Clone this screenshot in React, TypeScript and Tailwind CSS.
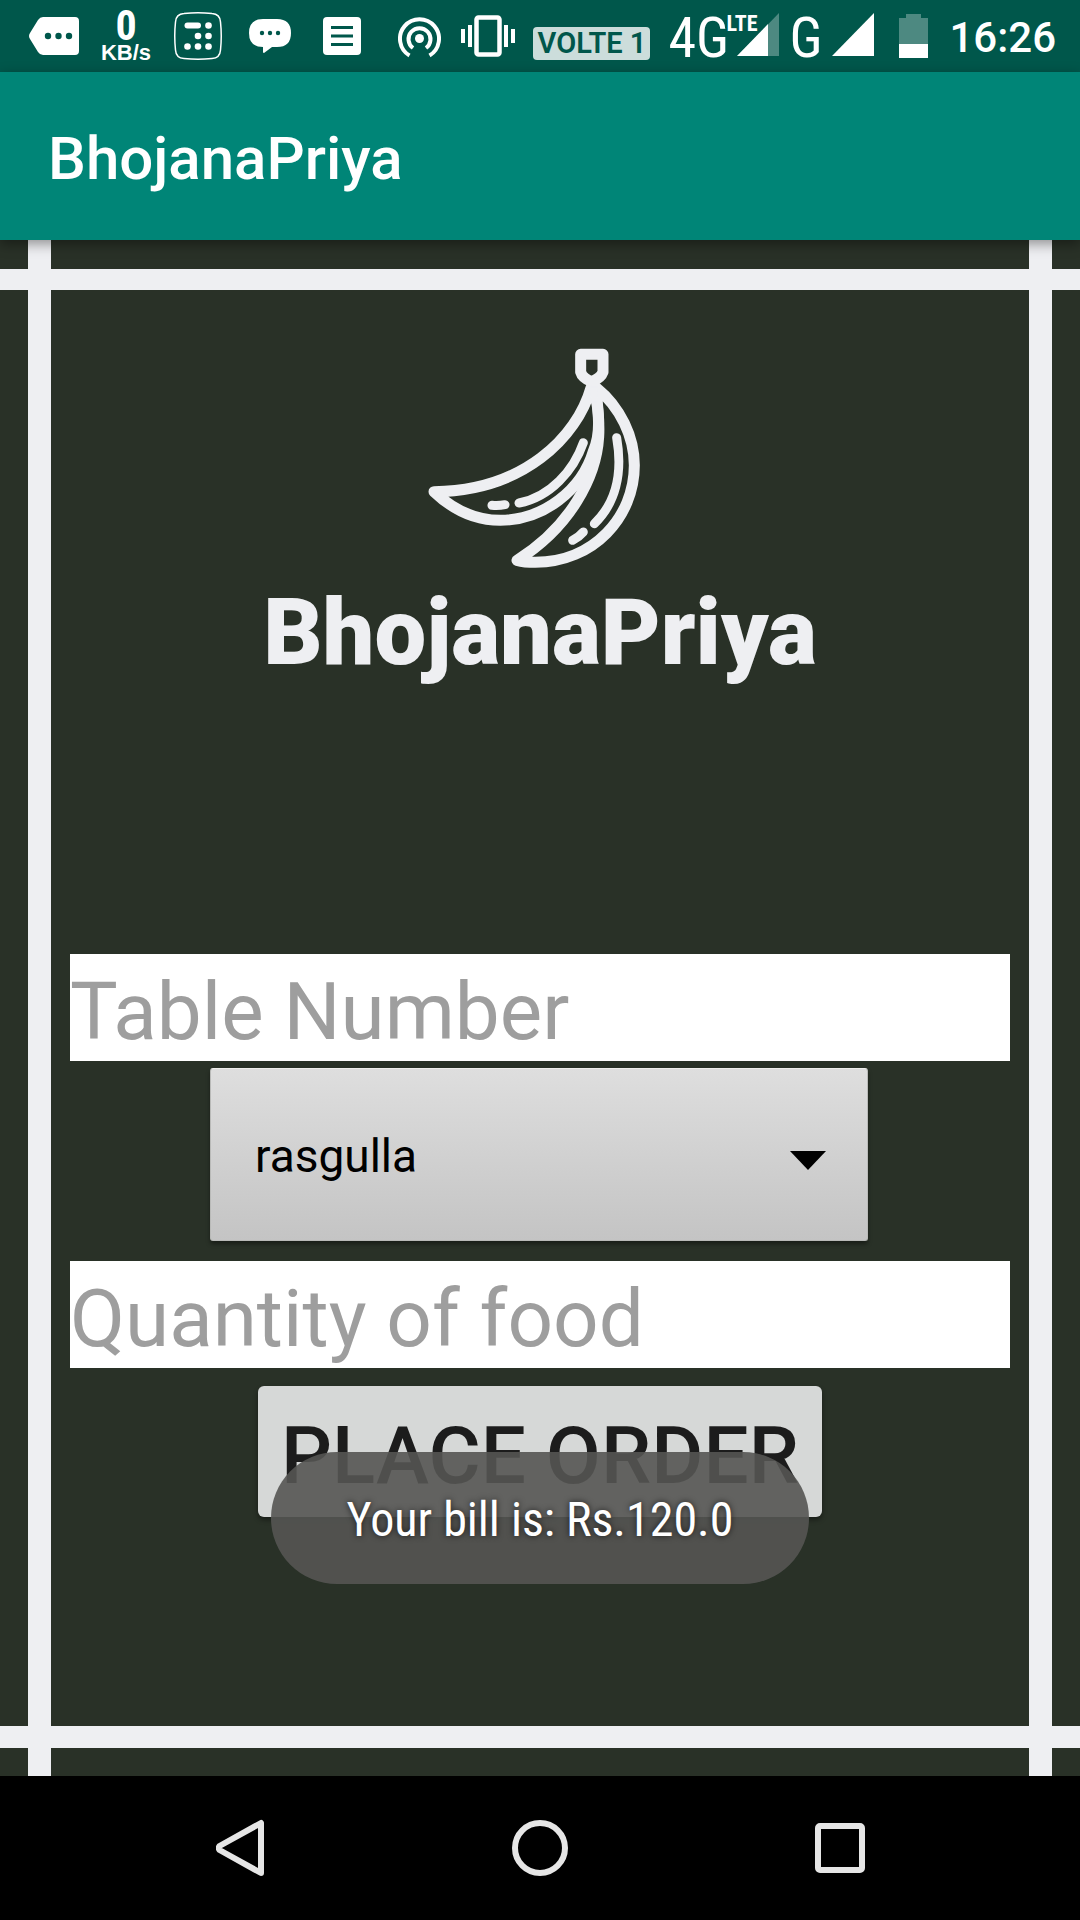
import React from "react";

function SignalIcon({ partial = false }: { partial?: boolean }) {
  return (
    <svg width="42" height="43" viewBox="0 0 42 43" aria-hidden="true">
      <path d="M0 43 42 0V43Z" fill="#fff" fillOpacity={partial ? 0.3 : 1} />
      {partial && <path d="M0 43 31 11V43Z" fill="#fff" />}
    </svg>
  );
}

function StatusBar() {
  return (
    <div className="flex h-[72px] items-start justify-between bg-[#00574b] pl-[29px] pr-[24px] text-white">
      <div className="flex items-start">
        <svg className="mt-[17px]" width="50" height="38" viewBox="0 0 50 38" aria-hidden="true">
          <path d="M14 0H46Q50 0 50 4V34Q50 38 46 38H14Q11 38 9 35L1 22Q-1 19 1 16L9 3Q11 0 14 0Z" fill="#fff" />
          <g fill="#00574b">
            <circle cx="19" cy="19" r="3.200" />
            <circle cx="29.500" cy="19" r="3.200" />
            <circle cx="40" cy="19" r="3.200" />
          </g>
        </svg>
        <div className="ml-[22px] mt-[8px] flex w-[50px] flex-col items-center font-bold">
          <span className="font-['Roboto_Condensed','Roboto',sans-serif] text-[42px] leading-[36px]">0</span>
          <span className="font-['Liberation_Sans',sans-serif] text-[22px] leading-[18px]">KB/s</span>
        </div>
        <svg className="ml-[23px] mt-[12px]" width="48" height="48" viewBox="0 0 48 48" aria-hidden="true">
          <path d="M10 1.500Q24 0 38 1.500Q46 2 46.500 10Q48 24 46.500 38Q46 46 38 46.500Q24 48 10 46.500Q2 46 1.500 38Q0 24 1.500 10Q2 2 10 1.500Z" fill="none" stroke="#fff" strokeWidth="1.500" />
          <path d="M13.500 13.500H24" stroke="#fff" strokeWidth="6" strokeLinecap="round" />
          <g fill="#fff">
            <circle cx="34.500" cy="13.500" r="3.300" />
            <circle cx="24" cy="24" r="3.300" />
            <circle cx="34.500" cy="24" r="3.300" />
            <circle cx="13.500" cy="34.500" r="3.300" />
            <circle cx="24" cy="34.500" r="3.300" />
            <circle cx="34.500" cy="34.500" r="3.300" />
          </g>
        </svg>
        <svg className="ml-[27px] mt-[19px]" width="42" height="34" viewBox="0 0 42 34" aria-hidden="true">
          <path d="M14 0H28Q42 0 42 14T28 28H23L15 34Q14 34 14 33V28Q0 28 0 14T14 0Z" fill="#fff" />
          <g fill="#00574b">
            <circle cx="13" cy="14" r="2.200" />
            <circle cx="21" cy="14" r="2.200" />
            <circle cx="29" cy="14" r="2.200" />
          </g>
        </svg>
        <svg className="ml-[32px] mt-[17px]" width="38" height="38" viewBox="0 0 38 38" aria-hidden="true">
          <rect width="38" height="38" rx="4" fill="#fff" />
          <path d="M8 10.500H30M8 19H30M8 27.500H30" stroke="#00574b" strokeWidth="3" />
        </svg>
      </div>

      <div className="flex items-start">
        <svg className="mt-[17px]" width="43" height="41" viewBox="0 0 43 41" aria-hidden="true">
          <g fill="none" stroke="#fff" strokeWidth="4">
            <path d="M11.500 38.500A19.500 19.500 0 1 1 31.500 38.500" />
            <path d="M15 31A11 11 0 1 1 28 31" />
          </g>
          <circle cx="21.500" cy="21.500" r="4.500" fill="#fff" />
        </svg>
        <svg className="ml-[20px] mt-[15px]" width="54" height="42" viewBox="0 0 54 42" aria-hidden="true">
          <rect x="15.500" y="2.500" width="23" height="37" rx="2" fill="none" stroke="#fff" strokeWidth="4.500" />
          <path d="M2 14V28M9 10V32M45 10V32M52 14V28" stroke="#fff" strokeWidth="4" />
        </svg>
        <span className="ml-[18px] mt-[27px] flex h-[33px] w-[117px] items-center justify-center whitespace-nowrap rounded bg-[#ccdddb] font-['Roboto',sans-serif] text-[29px] font-semibold leading-[33px] text-[#00574b]">
          VOLTE 1
        </span>
        <span className="ml-[18px] mt-[9px] w-[58px] font-['Roboto_Condensed','Roboto',sans-serif] text-[56px] leading-[58px]">4G</span>
        <span className="mt-[12px] w-[11px] font-['Roboto_Condensed','Roboto',sans-serif] text-[22px] font-bold leading-[24px]">LTE</span>
        <span className="mt-[13px]"><SignalIcon partial /></span>
        <span className="ml-[10px] mt-[9px] w-[38px] font-['Roboto_Condensed','Roboto',sans-serif] text-[56px] leading-[58px]">G</span>
        <span className="ml-[5px] mt-[13px]"><SignalIcon /></span>
        <svg className="ml-[25px] mt-[14px]" width="29" height="44" viewBox="0 0 29 44" aria-hidden="true">
          <path d="M7 0H22V4H29V30H0V4H7Z" fill="#fff" fillOpacity=".3" />
          <path d="M0 30H29V44H0Z" fill="#fff" />
        </svg>
        <time className="ml-[21px] mt-[13px] font-['Roboto',sans-serif] text-[42px] font-medium leading-[50px]">16:26</time>
      </div>
    </div>
  );
}

function BananaLogo() {
  return (
    <svg className="mr-[12px]" width="214" height="222" viewBox="80 50 642 666" fill="none" stroke="#eeeff2" strokeLinecap="round" strokeLinejoin="round" aria-hidden="true">
      <g strokeWidth="33">
        <path d="M541 72H608V125Q602 143 574 154Q546 143 541 125Z" />
        <path d="M572 172C530 320 370 482 101 484C165 545 230 570 300 570C430 569 545 480 580 360C605 300 592 220 580 172" />
        <path d="M588 172C660 230 702 320 702 405C702 560 580 695 405 696Q372 696 350 690C510 590 588 440 595 320C598 270 592 220 586 176" />
      </g>
      <path d="M570 170H592L590 215H574Z" fill="#eeeff2" />
      <g strokeWidth="27">
        <path d="M549 337C520 420 450 500 356 518M275 525Q294 527 314 523" />
        <path d="M649 322C668 430 645 520 582 580M517 630Q536 620 549 605" />
      </g>
    </svg>
  );
}

function OrderForm() {
  const field =
    "h-[107px] w-full bg-white pt-[8px] font-['Roboto',sans-serif] text-[80px] leading-[94px] text-[#212121] outline-none placeholder:text-[#9e9e9e] placeholder:opacity-100";
  return (
    <form className="mt-[260px] flex w-full flex-col items-center" onSubmit={(e) => e.preventDefault()}>
      <input className={field} type="text" aria-label="Table Number" placeholder="Table Number" />
      <div className="relative mr-[2px] mt-[7px] w-[70%]">
        <select
          aria-label="Food"
          className="h-[173px] w-full appearance-none rounded-[3px] border border-[#b9bab8] border-t-[#eeeeec] bg-linear-to-b from-[#dedede] to-[#c4c4c4] px-[44px] pt-[4px] font-['Roboto',sans-serif] text-[46px] text-black shadow-[0_3px_4px_rgba(0,0,0,0.4)] outline-none"
        >
          <option>rasgulla</option>
        </select>
        <svg className="pointer-events-none absolute right-[42px] top-[83px]" width="36" height="19" viewBox="0 0 36 19" aria-hidden="true">
          <path d="M0 0H36L18 19Z" fill="#000" />
        </svg>
      </div>
      <input className={`${field} mt-[20px]`} type="text" aria-label="Quantity of food" placeholder="Quantity of food" />
      <button
        type="submit"
        className="mt-[18px] h-[131px] whitespace-nowrap rounded-md bg-[#d6d8d7] px-[23px] pt-[8px] font-['Roboto',sans-serif] text-[80px] font-medium leading-[94px] text-[#1c1c1c] shadow-[0_3px_5px_rgba(0,0,0,0.4)]"
      >
        PLACE ORDER
      </button>
    </form>
  );
}

function NavigationBar() {
  return (
    <nav className="flex h-[144px] bg-black px-[90px]" aria-label="System">
      <button type="button" aria-label="Back" className="flex flex-1 items-center justify-center">
        <svg width="48" height="60" viewBox="0 0 48 60" fill="none" stroke="#e6e6e6" strokeWidth="6" strokeLinejoin="round">
          <path d="M45 5V55L3.500 32Q2 30 3.500 28Z" />
        </svg>
      </button>
      <button type="button" aria-label="Home" className="flex flex-1 items-center justify-center">
        <svg width="56" height="56" viewBox="0 0 56 56" fill="none" stroke="#e6e6e6" strokeWidth="6">
          <circle cx="28" cy="28" r="25" />
        </svg>
      </button>
      <button type="button" aria-label="Recent apps" className="flex flex-1 items-center justify-center">
        <svg width="50" height="50" viewBox="0 0 50 50" fill="none" stroke="#e6e6e6" strokeWidth="6">
          <rect x="3" y="3" width="44" height="44" rx="2" />
        </svg>
      </button>
    </nav>
  );
}

export default function App() {
  return (
    <div className="flex min-h-screen flex-col bg-black">
      <StatusBar />
      <header className="relative z-10 flex h-[168px] items-center bg-[#008577] px-[48px] shadow-[0_4px_12px_rgba(0,0,0,0.4)]">
        <h1 className="mt-[6px] font-['Roboto',sans-serif] text-[60px] font-medium leading-[72px] text-white">BhojanaPriya</h1>
      </header>
      <main className="relative flex flex-1 flex-col items-center bg-[#293127] bg-[linear-gradient(#eeeff2,#eeeff2),linear-gradient(#eeeff2,#eeeff2),linear-gradient(#eeeff2,#eeeff2),linear-gradient(#eeeff2,#eeeff2)] [background-position:left_28px_top,right_28px_top,left_top_29px,left_bottom_28px] [background-repeat:no-repeat] [background-size:23px_100%,23px_100%,100%_21px,100%_22px] px-[70px] pt-[107px]">
        <BananaLogo />
        <h2 className="mt-[3px] font-['Roboto',sans-serif] text-[92px] font-black leading-[122px] text-[#eeeff2]">BhojanaPriya</h2>
        <OrderForm />
        <div role="status" className="absolute bottom-[192px] flex h-[132px] items-center justify-center whitespace-nowrap rounded-full bg-[rgba(85,85,83,0.9)] px-[76px] pt-[4px] font-['Roboto_Condensed','Roboto',sans-serif] text-[48px] leading-[56px] text-white [text-shadow:0_0_6px_rgba(0,0,0,0.7)]">
          Your bill is: Rs.120.0
        </div>
      </main>
      <NavigationBar />
    </div>
  );
}
